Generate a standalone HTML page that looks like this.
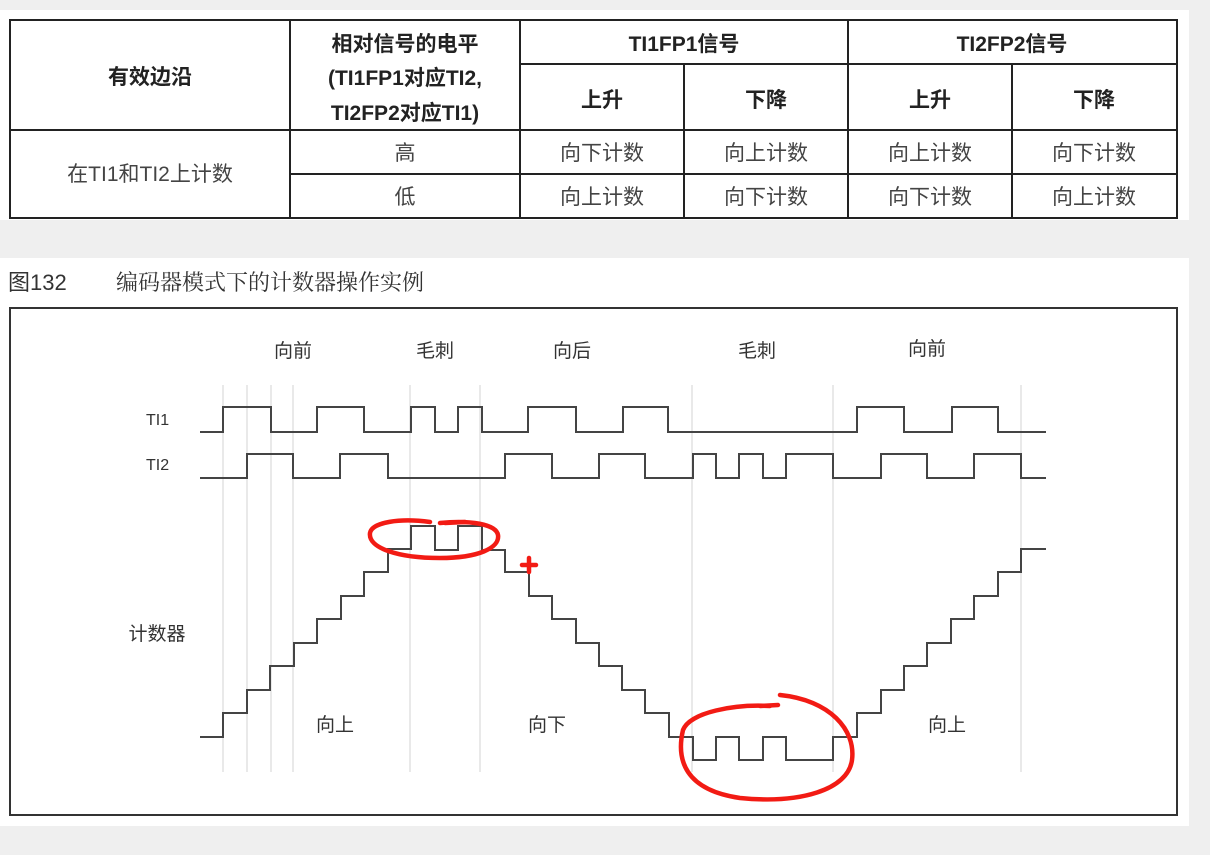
<!DOCTYPE html>
<html><head><meta charset="utf-8"><style>
html,body{margin:0;padding:0;background:#efefef;width:1210px;height:855px;overflow:hidden}
svg{display:block}
text{font-family:"Liberation Sans","Noto Sans CJK SC",sans-serif}
.sf{font-family:"Liberation Sans","Noto Serif CJK SC",serif}
</style></head><body>
<svg width="1210" height="855" viewBox="0 0 1210 855">
<rect x="0" y="0" width="1210" height="855" fill="#efefef"/>
<rect x="0" y="10" width="1189" height="210" fill="#fff"/>
<rect x="0" y="258" width="1189" height="568" fill="#fff"/>
<g stroke="#222" stroke-width="2" fill="none">
<rect x="10" y="20" width="1167" height="198"/>
<line x1="10" y1="130" x2="1177" y2="130"/>
<line x1="290" y1="174" x2="1177" y2="174"/>
<line x1="520" y1="64" x2="1177" y2="64"/>
<line x1="290" y1="20" x2="290" y2="218"/>
<line x1="520" y1="20" x2="520" y2="218"/>
<line x1="848" y1="20" x2="848" y2="218"/>
<line x1="684" y1="64" x2="684" y2="218"/>
<line x1="1012" y1="64" x2="1012" y2="218"/>
</g>
<g font-size="21" font-weight="bold" fill="#222" text-anchor="middle">
<text x="150" y="84">有效边沿</text>
<text x="405" y="51">相对信号的电平</text>
<text x="405" y="85">(TI1FP1对应TI2,</text>
<text x="405" y="120">TI2FP2对应TI1)</text>
<text x="684" y="51">TI1FP1信号</text>
<text x="1012" y="51">TI2FP2信号</text>
<text x="602" y="107">上升</text>
<text x="766" y="107">下降</text>
<text x="930" y="107">上升</text>
<text x="1094" y="107">下降</text>
</g>
<g class="sf" font-size="21" fill="#444" text-anchor="middle">
<text x="150" y="181">在TI1和TI2上计数</text>
<text x="405" y="160">高</text>
<text x="405" y="204">低</text>
<text x="602" y="160">向下计数</text><text x="766" y="160">向上计数</text><text x="930" y="160">向上计数</text><text x="1094" y="160">向下计数</text>
<text x="602" y="204">向上计数</text><text x="766" y="204">向下计数</text><text x="930" y="204">向下计数</text><text x="1094" y="204">向上计数</text>
</g>
<text x="8" y="290" font-size="22" fill="#333">图132</text>
<text class="sf" x="116" y="290" font-size="22" fill="#333">编码器模式下的计数器操作实例</text>
<rect x="10" y="308" width="1167" height="507" fill="none" stroke="#333" stroke-width="2"/>
<g stroke="#ddd" stroke-width="1.3">
<line x1="223" y1="385" x2="223" y2="772"/><line x1="247" y1="385" x2="247" y2="772"/>
<line x1="271" y1="385" x2="271" y2="772"/><line x1="293" y1="385" x2="293" y2="772"/>
<line x1="410" y1="385" x2="410" y2="772"/><line x1="480" y1="385" x2="480" y2="772"/>
<line x1="692" y1="385" x2="692" y2="772"/><line x1="833" y1="385" x2="833" y2="772"/>
<line x1="1021" y1="385" x2="1021" y2="772"/>
</g>
<g font-size="19" fill="#333" text-anchor="middle">
<text x="293" y="357">向前</text><text x="435" y="357">毛刺</text><text x="572" y="357">向后</text>
<text x="757" y="357">毛刺</text><text x="927" y="355">向前</text>
<text x="335" y="731">向上</text><text x="547" y="731">向下</text><text x="947" y="731">向上</text>
<text x="157" y="640">计数器</text>
</g>
<text x="146" y="425" font-size="16" fill="#333">TI1</text>
<text x="146" y="470" font-size="16" fill="#333">TI2</text>
<g stroke="#444" stroke-width="2" fill="none">
<path d="M200 432H223V407H271V432H317V407H364V432H411V407H435V432H458V407H482V432H528V407H576V432H623V407H668V432H857V407H904V432H952V407H998V432H1046"/>
<path d="M200 478H247V454H293V478H340V454H388V478H505V454H552V478H599V454H645V478H693V454H716V478H739V454H763V478H786V454H833V478H881V454H927V478H974V454H1021V478H1046"/>
<path d="M200 737H223V713H247V690H270V666H294V643H317V619H341V596H364V572H388V549H411V526H435V550H458V526H482V550H505V572H529V596H552V619H576V643H599V666H622V690H645V713H669V737H693V760H716V737H739V760H763V737H786V760H833V737H857V713H881V690H904V666H927V643H951V619H974V596H998V572H1021V549H1046"/>
</g>
<g stroke="#f21b14" stroke-width="4.5" fill="none" stroke-linecap="round">
<path d="M430 522C400 518 372 522 370 533C368 548 398 558 440 558C478 558 500 548 498 535C496 524 470 520 440 523"/>
<path d="M445 523L465 522"/>
<path d="M522 565H536M529 558V572"/>
<path d="M770 706C735 704 690 712 683 730C676 760 685 790 740 798C800 804 848 790 852 760C856 730 830 700 780 695"/>
<path d="M760 706L778 705"/>
</g>
</svg>
</body></html>
